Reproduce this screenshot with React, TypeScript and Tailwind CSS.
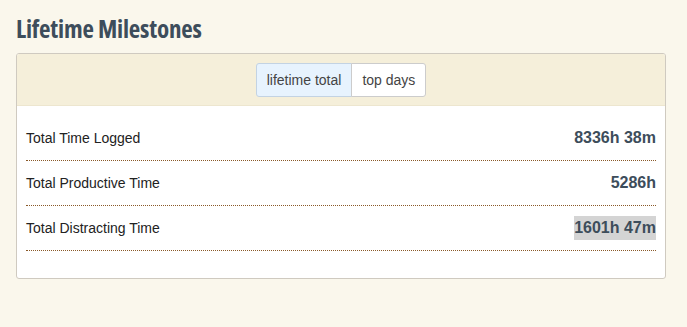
import { useState } from "react";

const rows = [
  { label: "Total Time Logged", value: "8336h 38m" },
  { label: "Total Productive Time", value: "5286h" },
  { label: "Total Distracting Time", value: "1601h 47m", selected: true },
];

export default function App() {
  const [tab, setTab] = useState<"lifetime" | "top">("lifetime");

  return (
    <div className="min-h-[327px] w-[687px] bg-[#faf7ec] pl-4 pr-[21px] pt-[14px] font-['Liberation_Sans',Arial,sans-serif]">
      <h2 className="font-['Open_Sans',sans-serif] text-[25px] font-bold leading-[29px] tracking-[-0.2px] text-[#3d4d5b] [font-stretch:condensed]">
        Lifetime Milestones
      </h2>

      <div className="mt-[10px] overflow-hidden rounded-[3px] border border-[#cfcac0] bg-white">
        <div className="flex justify-center border-b border-[#ede6cf] bg-[#f5efda] pt-[9px] pb-[8px]">
          <div className="flex">
            <button
              onClick={() => setTab("lifetime")}
              className={`h-[34px] rounded-l-[3px] border px-[10px] text-[14px] text-[#444] ${
                tab === "lifetime" ? "border-[#c3d3e3] bg-[#e7f3fe]" : "border-[#ccc] bg-white"
              }`}
            >
              lifetime total
            </button>
            <button
              onClick={() => setTab("top")}
              className={`-ml-px h-[34px] rounded-r-[3px] border px-[10px] text-[14px] text-[#444] ${
                tab === "top" ? "border-[#c3d3e3] bg-[#e7f3fe]" : "border-[#ccc] bg-white"
              }`}
            >
              top days
            </button>
          </div>
        </div>

        <div className="px-[9px] pt-[10px] pb-[27px]">
          {rows.map((r) => (
            <div
              key={r.label}
              className="flex h-[45px] items-center justify-between border-b border-dotted border-[#8a5a2a]"
            >
              <span className="text-[14px] text-[#222]">{r.label}</span>
              <span
                className={`text-[16px] font-bold text-[#3d4d5b] ${r.selected ? "bg-[#d4d4d4]" : ""}`}
              >
                {r.value}
              </span>
            </div>
          ))}
        </div>
      </div>
    </div>
  );
}
